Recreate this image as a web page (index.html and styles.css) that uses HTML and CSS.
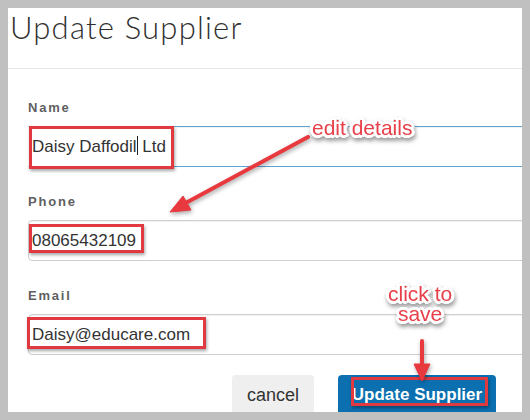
FILE: index.html
```html
<!DOCTYPE html>
<html>
<head>
<meta charset="utf-8">
<link rel="stylesheet" href="styles.css">
</head>
<body>
<div class="modal">
  <div class="modal-header">
    <h1 class="title">Update Supplier</h1>
  </div>
  <div class="modal-body">
    <div class="group">
      <div class="label">Name</div>
      <div class="field focused">Daisy Daffodil<span class="caret"></span> Ltd</div>
    </div>
    <div class="group">
      <div class="label">Phone</div>
      <div class="field">08065432109</div>
    </div>
    <div class="group group-last">
      <div class="label">Email</div>
      <div class="field">Daisy@educare.com</div>
    </div>
    <div class="actions">
      <div class="btn btn-cancel">cancel</div>
      <div class="btn btn-primary">Update Supplier</div>
    </div>
  </div>
</div>

<div class="marks">
  <div class="hl hl-name"></div>
  <div class="hl hl-phone"></div>
  <div class="hl hl-email"></div>
  <div class="hl hl-save"></div>
  <svg class="arrows" width="530" height="420" viewBox="0 0 530 420">
    <g fill="#e8393f" stroke="#e8393f">
      <line x1="308" y1="137" x2="182" y2="205" stroke-width="4" stroke-linecap="round"/>
      <polygon points="170,212 183,196 191,210" stroke-width="1" stroke-linejoin="round"/>
      <line x1="422" y1="341" x2="422" y2="368" stroke-width="4" stroke-linecap="round"/>
      <polygon points="422,381 414,364 430,364" stroke-width="1" stroke-linejoin="round"/>
    </g>
  </svg>
  <div class="note note-edit">edit details</div>
  <div class="note note-save"><div>click to</div><div>save</div></div>
</div>
</body>
</html>
```

FILE: styles.css
```css
html, body {
  margin: 0;
  padding: 0;
}
body {
  background: #c0c0c0;
  padding: 8px;
  width: 514px;
  height: 404px;
  overflow: hidden;
  font-family: "Liberation Sans", Arial, sans-serif;
}
.modal {
  background: #fff;
  width: 514px;
  height: 404px;
  overflow: hidden;
}
.modal-header {
  height: 60px;
  border-bottom: 1px solid #e6e6e6;
  padding-left: 2px;
}
.title {
  margin: 0;
  font-family: "Lato", sans-serif;
  font-weight: 300;
  font-size: 31px;
  letter-spacing: 1.2px;
  line-height: 36px;
  color: #2f2f2f;
  padding-top: 1px;
}
.modal-body {
  padding: 31px 0 0 20px;
}
.group {
  margin-bottom: 27px;
}
.group-last {
  margin-bottom: 20px;
}
.label {
  font-size: 13px;
  line-height: 16px;
  font-weight: bold;
  letter-spacing: 1.8px;
  color: #5f5f5f;
  margin-bottom: 10px;
}
.field {
  box-sizing: border-box;
  width: 520px;
  height: 41px;
  border: 1px solid #cfcfcf;
  border-radius: 4px;
  padding: 0 3px;
  font-size: 17px;
  line-height: 39px;
  color: #333;
  box-shadow: inset 0 1px 1px rgba(0,0,0,.06);
}
.field.focused {
  border-color: #5fa3d3;
  border-left-color: transparent;
  border-radius: 0;
}
.caret {
  display: inline-block;
  width: 1px;
  height: 19px;
  background: #222;
  vertical-align: -3px;
}
.actions {
  display: flex;
  justify-content: flex-end;
  gap: 24px;
  padding-right: 26px;
}
.btn {
  height: 40px;
  box-sizing: border-box;
  padding: 8px 0 0;
  border-radius: 4px;
  font-size: 18px;
  line-height: 24px;
  text-align: center;
}
.btn-cancel {
  width: 82px;
  background: #efefef;
  color: #333;
}
.btn-primary {
  width: 158px;
  background: #0b6fb0;
  color: #fff;
  font-weight: bold;
  font-size: 17px;
}
.marks {
  position: absolute;
  left: 0;
  top: 0;
  width: 530px;
  height: 420px;
  pointer-events: none;
}
.hl {
  position: absolute;
  box-sizing: border-box;
  border: 3px solid #e03a40;
  box-shadow: 1px 2px 3px rgba(0,0,0,.35);
}
.hl-name { left: 29px; top: 126px; width: 145px; height: 43px; }
.hl-phone { left: 29px; top: 224px; width: 115px; height: 29px; }
.hl-email { left: 27px; top: 317px; width: 179px; height: 32px; }
.hl-save { left: 351px; top: 377px; width: 137px; height: 29px; }
.arrows {
  position: absolute;
  left: 0;
  top: 0;
  filter: drop-shadow(1px 2px 2px rgba(0,0,0,.35));
}
.note {
  position: absolute;
  font-family: "Liberation Sans", Arial, sans-serif;
  font-size: 21px;
  line-height: 20px;
  color: #e8404a;
  text-align: center;
  text-shadow:
    -2px -2px 0 #fff, 2px -2px 0 #fff, -2px 2px 0 #fff, 2px 2px 0 #fff,
    0 -3px 0 #fff, 0 3px 0 #fff, -3px 0 0 #fff, 3px 0 0 #fff,
    -3px -1px 0 #fff, 3px 1px 0 #fff, -1px 3px 0 #fff, 1px -3px 0 #fff;
  filter: drop-shadow(1px 3px 2px rgba(0,0,0,.4));
}
.note-edit { left: 312px; top: 118px; }
.note-save {
  left: 388px;
  top: 284px;
  display: flex;
  flex-direction: column;
  gap: 1px;
  line-height: 19px;
}
```
